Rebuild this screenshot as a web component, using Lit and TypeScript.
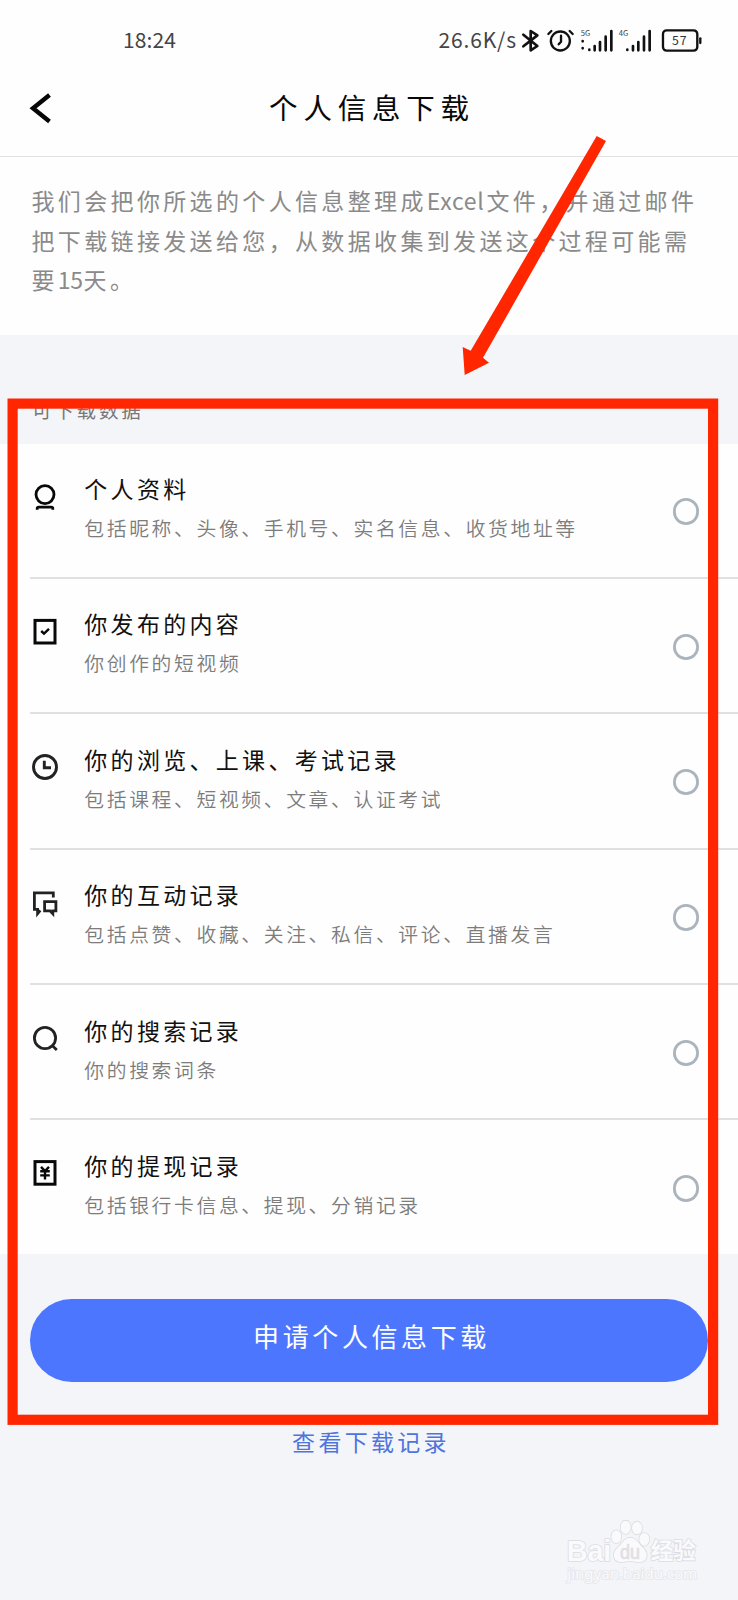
import { LitElement, html, svg, css, SVGTemplateResult } from "lit";
import { customElement, property } from "lit/decorators.js";

interface Entry {
  icon: string;
  title: string;
  note: string;
}

const ENTRIES: Entry[] = [
  { icon: "person", title: "个人资料", note: "包括昵称、头像、手机号、实名信息、收货地址等" },
  { icon: "publish", title: "你发布的内容", note: "你创作的短视频" },
  { icon: "clock", title: "你的浏览、上课、考试记录", note: "包括课程、短视频、文章、认证考试" },
  { icon: "chat", title: "你的互动记录", note: "包括点赞、收藏、关注、私信、评论、直播发言" },
  { icon: "search", title: "你的搜索记录", note: "你的搜索词条" },
  { icon: "money", title: "你的提现记录", note: "包括银行卡信息、提现、分销记录" },
];

const ICONS: Record<string, SVGTemplateResult> = {
  person: svg`<circle cx="15" cy="12.6" r="9" stroke-width="2.8"/><path d="M7.2 27.8V26.6Q7.2 25.2 8.8 25.2H21.2Q22.8 25.2 22.8 26.6V27.8" stroke-width="2.8"/>`,
  publish: svg`<rect x="5" y="3.4" width="20" height="22.6" stroke-width="3"/><path d="M11.2 14L14 16.6L19 11.8" stroke-width="2.4"/>`,
  clock: svg`<g stroke="#222"><circle cx="15" cy="15" r="11.5" stroke-width="2.9"/><path d="M14.3 8.8V15.8H21" stroke-width="2.9"/></g>`,
  chat: svg`<g stroke="#222" stroke-width="2.8"><path d="M23.3 9.5V4.8H4.4V21.4H7.6V25.6L10.3 22.4"/><path d="M14.6 13.7H25.9V22.8H22.8V25.8L20 22.8H14.6Z"/></g>`,
  search: svg`<g stroke="#222" stroke-width="2.8"><circle cx="15" cy="15" r="10.6"/><path d="M22.2 22.6L26.8 27"/></g>`,
  money: svg`<rect x="5" y="3.6" width="20" height="22.6" stroke-width="3"/><path d="M11 8.8L15 13L19 8.8M15 12.6V21.6M10.2 13.3H19.8M10.2 17.4H19.8" stroke-width="2.4"/>`,
};

const FONT = css`"Noto Sans CJK SC", sans-serif`;

@customElement("data-row")
export class DataRow extends LitElement {
  @property({ attribute: false }) entry!: Entry;

  static styles = css`
    :host {
      display: flex;
      box-sizing: border-box;
      height: 135.4px;
      margin-left: 30px;
      border-bottom: 2px solid #e0e0e2;
      font-family: ${FONT};
    }
    :host([last]) {
      height: 134px;
      border-bottom: 0;
    }
    .icon {
      flex: none;
      width: 30px;
      height: 30px;
      margin-top: 38px;
      fill: none;
      stroke: #080808;
    }
    .texts {
      flex: 1;
      padding: 27.6px 0 0 24.3px;
      white-space: nowrap;
    }
    .title {
      font-size: 23px;
      line-height: 34px;
      letter-spacing: 3.3px;
      color: #111;
    }
    .note {
      margin-top: 5px;
      font-size: 19.8px;
      line-height: 36px;
      letter-spacing: 2.65px;
      font-weight: 350;
      color: #7c7c7c;
    }
    .radio {
      flex: none;
      width: 26.5px;
      height: 26.5px;
      margin: 54.7px 38.8px 0 0;
      box-shadow: inset 0 0 0 2.8px #abb4bd;
      border-radius: 50%;
    }
  `;

  render() {
    return html`
      <svg class="icon" viewBox="0 0 30 30">${ICONS[this.entry.icon]}</svg>
      <div class="texts">
        <div class="title">${this.entry.title}</div>
        <div class="note">${this.entry.note}</div>
      </div>
      <span class="radio"></span>
    `;
  }
}

@customElement("status-bar")
export class StatusBar extends LitElement {
  static styles = css`
    :host {
      display: flex;
      align-items: center;
      height: 80px;
      padding-left: 123px;
      font-family: ${FONT};
      color: #444;
      font-size: 21px;
      line-height: 30px;
    }
    .time {
      width: 315.5px;
      padding-bottom: 3px;
      letter-spacing: 0.1px;
    }
    .speed {
      width: 80.5px;
      padding-bottom: 3px;
      letter-spacing: 0.85px;
      white-space: nowrap;
    }
    .icons {
      width: 186.67px;
      height: 26.67px;
    }
    .line {
      fill: none;
      stroke: #111;
      stroke-linecap: round;
      stroke-linejoin: round;
    }
    .tiny {
      font-size: 23px;
      fill: #444;
    }
    .level {
      font-size: 37px;
      letter-spacing: 3px;
      fill: #333;
    }
  `;

  render() {
    return html`
      <span class="time">18:24</span>
      <span class="speed">26.6K/s</span>
      <svg class="icons" viewBox="450 80 560 80">
        <g class="line">
          <path stroke-width="8" d="M463 103L505 137L485 150V92L505 105L463 138" />
          <circle cx="574" cy="122" r="28.5" stroke-width="7" />
          <path stroke-width="7" d="M576 106V124L569 132M538 101L547 92M602 92L611 101" />
          <path stroke-width="8" d="M641 122v1M641 143v1M661 148v1M677 137v13M693 125v25M710 109v41M727 92v58" />
          <path stroke-width="8" d="M775 148v1M792 137v13M808 125v25M825 109v41M842 92v58" />
          <rect x="882" y="90" width="103" height="61" rx="11" stroke-width="7" />
          <path stroke-width="7" d="M994 114v14" />
        </g>
        <text class="tiny" x="635" y="106">5G</text>
        <text class="tiny" x="749" y="106">4G</text>
        <text class="level" x="909" y="134">57</text>
      </svg>
    `;
  }
}

@customElement("app-root")
export class AppRoot extends LitElement {
  static styles = css`
    :host {
      display: flex;
      flex-direction: column;
      position: relative;
      width: 738px;
      height: 1600px;
      overflow: hidden;
      background: #f4f5f9;
      font-family: ${FONT};
    }
    .top {
      background: #fefefe;
      border-bottom: 1.5px solid #e2e2e2;
      height: 155.5px;
    }
    .nav {
      display: grid;
      grid-template-columns: 60px 1fr 60px;
      align-items: center;
      height: 56px;
    }
    .back {
      width: 22px;
      height: 32px;
      margin-left: 29px;
      fill: none;
      stroke: #060606;
      stroke-width: 4.4;
    }
    h1 {
      margin: 0;
      padding: 0 0 3px 6px;
      text-align: center;
      font-size: 28.5px;
      line-height: 40px;
      font-weight: 400;
      letter-spacing: 5.8px;
      color: #080808;
    }
    .intro {
      box-sizing: border-box;
      height: 178px;
      padding: 24.9px 0 0 31.5px;
      background: #fefefe;
      font-size: 23px;
      line-height: 39.4px;
      letter-spacing: 3.35px;
      font-weight: 400;
      color: #8a8a8a;
      white-space: nowrap;
    }
    .latin {
      margin-right: 2px;
      letter-spacing: 0.7px;
    }
    .digits {
      margin-right: 1px;
      letter-spacing: -0.4px;
    }
    .label {
      box-sizing: border-box;
      height: 109px;
      padding: 60.5px 0 0 32px;
      font-size: 19.5px;
      line-height: 30px;
      letter-spacing: 2.8px;
      color: #777;
    }
    .list {
      background: #fefefe;
    }
    .actions {
      display: flex;
      flex-direction: column;
      align-items: center;
      padding: 44.4px 30px 0;
    }
    .submit {
      align-self: stretch;
      height: 82.8px;
      border: 0;
      border-radius: 42px;
      padding: 0 0 9px 5px;
      background: #4d76ff;
      color: #fff;
      font: 400 26px ${FONT};
      letter-spacing: 3.6px;
    }
    .records {
      margin-top: 42.5px;
      padding-left: 4px;
      font-size: 23px;
      line-height: 34px;
      letter-spacing: 3.3px;
      color: #4f74dc;
    }
    .marks,
    .brand {
      position: absolute;
      pointer-events: none;
    }
    .marks {
      inset: 0;
      width: 738px;
      height: 1600px;
    }
    .brand {
      left: 520px;
      top: 1490px;
      width: 218px;
      height: 110px;
      fill: #fafafc;
      stroke: #dcdde2;
      stroke-width: 5;
      paint-order: stroke;
    }
    .logo {
      font: 700 86px "Liberation Sans", sans-serif;
    }
    .du {
      font: 400 60px "Liberation Sans", sans-serif;
      fill: #e0e1e6;
      stroke: #d9dadf;
      stroke-width: 2;
    }
    .han {
      font: 700 68px ${FONT};
    }
    .site {
      font: 400 42px "Noto Sans", sans-serif;
      stroke: #e6e7eb;
    }
  `;

  render() {
    return html`
      <header class="top">
        <status-bar></status-bar>
        <div class="nav">
          <svg class="back" viewBox="0 0 22 32"><path d="M20.5 3L4 16.3L20.5 29.5" /></svg>
          <h1>个人信息下载</h1>
        </div>
      </header>
      <div class="intro">
        我们会把你所选的个人信息整理成<span class="latin">Excel</span>文件，并通过邮件<br />
        把下载链接发送给您，从数据收集到发送这个过程可能需<br />
        要<span class="digits">15</span>天。
      </div>
      <div class="label">可下载数据</div>
      <div class="list">
        ${ENTRIES.map(
          (entry, i) => html`<data-row .entry=${entry} ?last=${i === ENTRIES.length - 1}></data-row>`
        )}
      </div>
      <div class="actions">
        <button class="submit">申请个人信息下载</button>
        <a class="records">查看下载记录</a>
      </div>
      <svg class="brand" viewBox="0 0 654 330">
        <text class="logo" x="140" y="212" textLength="134" lengthAdjust="spacingAndGlyphs">Bai</text>
        <ellipse cx="289" cy="140" rx="15" ry="19" />
        <ellipse cx="317" cy="112" rx="15" ry="20" />
        <ellipse cx="351" cy="114" rx="15" ry="19" />
        <ellipse cx="373" cy="148" rx="15" ry="19" />
        <path d="M331 143C350 143 357 163 370 174C385 188 384 214 362 216C347 217 342 213 331 213C320 213 312 217 300 216C277 213 277 187 291 175C306 163 312 143 331 143Z" />
        <text class="du" x="300" y="207" textLength="60" lengthAdjust="spacingAndGlyphs">du</text>
        <text class="han" x="392" y="208">经验</text>
        <text class="site" x="142" y="267" textLength="390" lengthAdjust="spacingAndGlyphs">jingyan.baidu.com</text>
      </svg>
      <svg class="marks" viewBox="0 0 738 1600">
        <rect x="12.6" y="403.6" width="700.5" height="1016.2" fill="none" stroke="#ff2600" stroke-width="10.2" />
        <polygon
          points="596.7,136 606,141 483,357.7 489,362.7 464.7,375 462.7,347 470.7,350.7"
          fill="#ff2600"
        />
      </svg>
    `;
  }
}
